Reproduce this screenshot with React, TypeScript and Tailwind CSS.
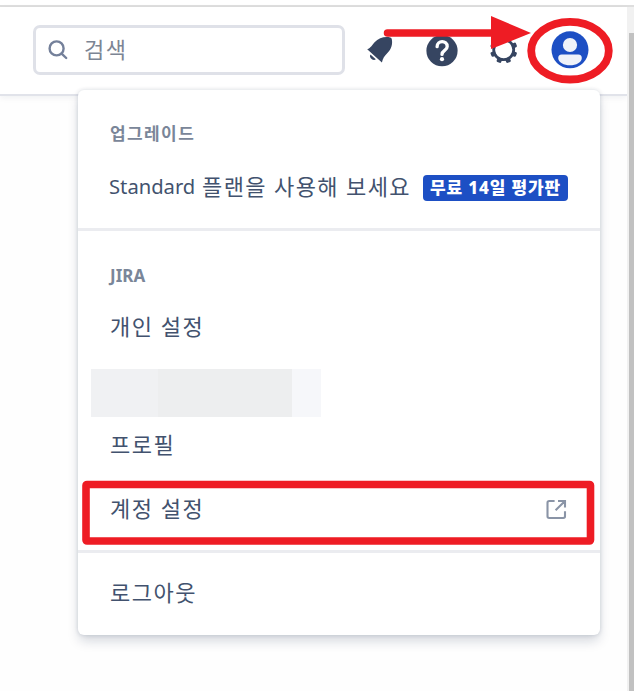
import React from "react";

const itemText = "text-[22px] leading-[30px] text-[#42526e] tracking-[1.5px] whitespace-nowrap";
const headingText = "text-[17px] leading-[20px] font-bold text-[#7a8699] whitespace-nowrap";

function SearchBox() {
  return (
    <div className="ml-[33px] mt-[18px] flex h-[50px] w-[312px] shrink-0 items-center rounded-[7px] border-[3px] border-[#dfe1e8] bg-white pl-[12px]">
      <svg width="20" height="20" viewBox="0 0 20 20" fill="none" stroke="#74809a" strokeWidth="2.4" strokeLinecap="round">
        <circle cx="8.6" cy="8.4" r="7" />
        <path d="M13.6 13.6 18.2 18" />
      </svg>
      <span className="-mt-[3px] ml-[16px] text-[22px] leading-[30px] tracking-[1.4px] text-[#7c8594]">검색</span>
    </div>
  );
}

function BellIcon() {
  return (
    <svg className="ml-[21px] mt-[29px] shrink-0" width="28" height="28" viewBox="0 0 28 28" fill="#364561">
      <path d="M1.2 13.2 C5 11.8 6.2 8.8 8.6 6.2 C12.6 1.8 19 .2 24.2 1.4 Q25.6 1.7 25.8 3.2 C26.8 8 25.4 13 21.4 17 C18.4 20 16.8 22.4 15.9 26.4 Z" />
      <path d="M4.4 18.6 9.8 23.2 C7.4 25.5 2.6 22 4.4 18.6Z" />
    </svg>
  );
}

function HelpIcon() {
  return (
    <svg className="ml-[32px] mt-[28px] shrink-0" width="32" height="32" viewBox="0 0 32 32">
      <circle cx="16" cy="15.7" r="15.6" fill="#364561" />
      <path d="M11.1 11.7c0-6.7 10.1-6.6 10.1-.3 0 4.2-5.2 3.6-5.2 8" fill="none" stroke="#fff" strokeWidth="3.3" strokeLinecap="round" />
      <circle cx="16" cy="24.2" r="2.1" fill="#fff" />
    </svg>
  );
}

const teeth = [22.5, 67.5, 112.5, 157.5, 202.5, 247.5, 292.5, 337.5];

function GearIcon() {
  return (
    <svg className="ml-[32px] mt-[29px] shrink-0" width="28" height="28" viewBox="0 0 28 28">
      <circle cx="13.7" cy="13.7" r="10" fill="none" stroke="#364561" strokeWidth="2.8" />
      {teeth.map((a) => (
        <rect key={a} x="11.3" y="0" width="4.8" height="5" rx="1.2" fill="#364561" transform={`rotate(${a} 13.7 13.7)`} />
      ))}
    </svg>
  );
}

function Avatar() {
  return (
    <svg className="ml-[33px] mt-[24px] shrink-0" width="38" height="38" viewBox="0 0 38 38">
      <circle cx="19" cy="18.8" r="18.5" fill="#1d4fc4" />
      <circle cx="19" cy="14" r="7.1" fill="#eff2f9" />
      <path d="M7.2 27c0-2.3 1.2-3.6 3.5-3.6h16.6c2.3 0 3.5 1.3 3.5 3.6C30.8 31.5 25 34.3 19 34.3S7.2 31.5 7.2 27Z" fill="#eff2f9" />
    </svg>
  );
}

function ExternalIcon() {
  return (
    <svg className="mr-[33px] mt-[2px]" width="21" height="21" viewBox="0 0 21 21" fill="none" stroke="#8a94a6" strokeWidth="2.1">
      <path d="M8.6 2H3.2Q1.5 2 1.5 3.7V17.3Q1.5 19 3.2 19H17.3Q19 19 19 17.3V12.2M12 2H19V8.5M19 2 9.6 11.2" />
    </svg>
  );
}

function AccountMenu() {
  return (
    <div className="absolute left-[78px] top-[90px] flex h-[545px] w-[522px] flex-col rounded-[6px] bg-white shadow-[0_7px_12px_-1px_rgba(9,30,66,0.17),0_0_4px_rgba(9,30,66,0.16)]">
      <section className="h-[138px] pl-[32px] pt-[34px]">
        <h2 className={headingText + " tracking-[1.4px]"}>업그레이드</h2>
        <div className="mt-[27px] flex items-center">
          <span className="-ml-px w-[93px] text-[20.5px] leading-[30px] text-[#42526e]">
            <span className="inline-block origin-left scale-x-[0.985]">Standard</span>
          </span>
          <span className="w-[221px] text-[22px] leading-[30px] tracking-[1.4px] whitespace-nowrap text-[#42526e]">플랜을 사용해 보세요</span>
          <span className="mt-[4px] flex h-[26px] w-[145px] items-center justify-center rounded-[4px] bg-[#1d4fc4] pb-px text-[17px] font-extrabold tracking-[0.85px] whitespace-nowrap text-white">
            무료 14일 평가판
          </span>
        </div>
      </section>
      <section className="h-[322px] border-t-[3px] border-[#ebecf0] pt-[35px]">
        <h2 className={headingText + " pl-[32px]"}>JIRA</h2>
        <div className={itemText + " mt-[25px] pl-[32px]"}>개인 설정</div>
        <div className="ml-[13px] mt-[28px] flex h-[48px] w-[230px]">
          <div className="w-[67px] bg-[#f0f1f3]" />
          <div className="w-[134px] bg-[#edeeef]" />
          <div className="w-[29px] bg-[#f6f7fa]" />
        </div>
        <div className={itemText + " mt-[12px] pl-[32px]"}>프로필</div>
        <div className="mt-[34px] flex items-center justify-between pl-[32px]">
          <span className={itemText}>계정 설정</span>
          <ExternalIcon />
        </div>
      </section>
      <section className="flex-1 border-t-[3px] border-[#ebecf0] pl-[32px] pt-[24px]">
        <div className={itemText}>로그아웃</div>
      </section>
    </div>
  );
}

function Annotations() {
  return (
    <svg className="pointer-events-none absolute left-0 top-0" width="634" height="691" viewBox="0 0 634 691">
      <path d="M387.5 33H495" stroke="#ee1c24" strokeWidth="7.5" strokeLinecap="round" />
      <path d="M491 16 531 33 491 49Z" fill="#ee1c24" />
      <ellipse cx="570" cy="50.7" rx="38.8" ry="28.8" fill="none" stroke="#ee1c24" strokeWidth="7.8" />
      <rect x="86" y="484.5" width="504.5" height="56.5" rx="1" fill="none" stroke="#ee1c24" strokeWidth="7.6" />
    </svg>
  );
}

export default function App() {
  return (
    <div className="relative flex h-[691px] w-[634px] flex-col overflow-hidden bg-[#fefefe] font-['Noto_Sans','Noto_Sans_CJK_KR',sans-serif]">
      <div className="h-[7px] shrink-0 border-b-[2px] border-[#dedede] bg-white" />
      <div className="flex flex-1">
        <main className="w-[627px]">
          <header className="flex h-[89px] items-start border-b-[2px] border-[#e1e3ea] bg-white shadow-[0_2px_6px_rgba(9,30,66,0.06)]">
            <SearchBox />
            <BellIcon />
            <HelpIcon />
            <GearIcon />
            <Avatar />
          </header>
        </main>
        <aside className="w-[7px] bg-[#f1f1f1] pl-[2px] pt-[26px]">
          <div className="h-full bg-[#c1c1c1]" />
        </aside>
      </div>
      <AccountMenu />
      <Annotations />
    </div>
  );
}
